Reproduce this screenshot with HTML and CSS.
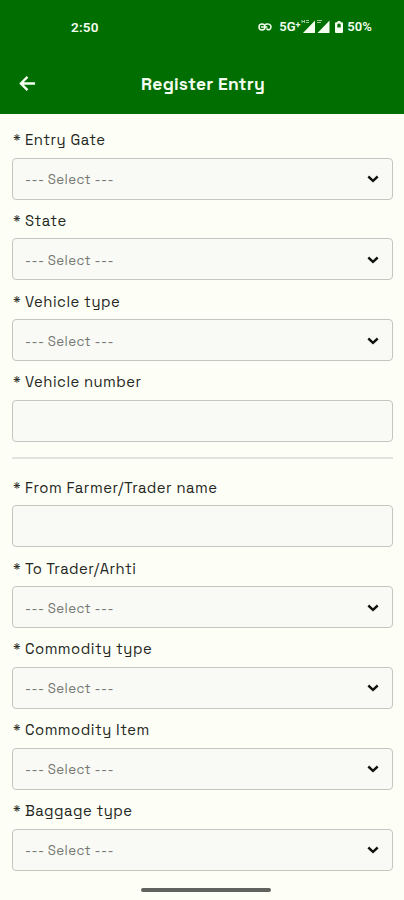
FILE: index.html
```html
<!DOCTYPE html>
<html lang="en">
<head>
<meta charset="utf-8">
<title>Register Entry</title>
<link rel="stylesheet" href="styles.css">
</head>
<body>
<svg class="defs" aria-hidden="true"><symbol id="chevron" viewBox="0 0 12 8"><path d="M1.3 1.5 6 5.8 10.7 1.5" fill="none" stroke="currentColor" stroke-width="2.4"/></symbol></svg>
<header class="header">
  <div class="status">
    <span class="time">2:50</span>
    <div class="indicators">
      <svg class="vpn" viewBox="0 0 14 10"><g fill="none" stroke="currentColor" stroke-width="1.5"><circle cx="4" cy="5" r="3"/><path d="M3 5h6.3M7 2.5C9 1.5 13 1.7 13 4.8 13 8 9.800 8.700 8.500 6.500"/></g></svg>
      <span class="network">5G<sup>+</sup></span>
      <svg class="signal" viewBox="0 0 29 14"><path d="M1 14 13 1.500V14ZM15.500 14l12-12.500V14Z" fill="currentColor"/><path d="M0 1v3M0 2.500h2M2.500 1v3M4 1.500h3M4 3.500h3M15 1.500h5M15 3.500h4" stroke="currentColor" opacity=".65"/></svg>
      <svg class="battery" viewBox="0 0 8 12"><path fill="currentColor" fill-rule="evenodd" d="M2.500 0h3v1.200H7q1 0 1 1V11q0 1-1 1H1q-1 0-1-1V2.200q0-1 1-1h1.500ZM2.300 3.500v3h3.400v-3L4 2.300Z"/></svg>
      <span class="percent">50%</span>
    </div>
  </div>
  <div class="bar">
    <svg class="back" viewBox="0 0 18 18"><path d="M17 9H2.500M9 2 2 9l7 7" fill="none" stroke="currentColor" stroke-width="2.500"/></svg>
    <h1 class="title">Register Entry</h1>
  </div>
</header>
<main class="form">
  <div class="field"><div class="label"><span class="star">*</span><span>Entry Gate</span></div><div class="control"><span class="value">--- Select ---</span><svg class="chevron"><use href="#chevron"/></svg></div></div>
  <div class="field"><div class="label"><span class="star">*</span><span>State</span></div><div class="control"><span class="value">--- Select ---</span><svg class="chevron"><use href="#chevron"/></svg></div></div>
  <div class="field"><div class="label"><span class="star">*</span><span>Vehicle type</span></div><div class="control"><span class="value">--- Select ---</span><svg class="chevron"><use href="#chevron"/></svg></div></div>
  <div class="field"><div class="label"><span class="star">*</span><span>Vehicle number</span></div><div class="control"></div></div>
  <div class="divider"></div>
  <div class="field"><div class="label"><span class="star">*</span><span>From Farmer/Trader name</span></div><div class="control"></div></div>
  <div class="field"><div class="label"><span class="star">*</span><span>To Trader/Arhti</span></div><div class="control"><span class="value">--- Select ---</span><svg class="chevron"><use href="#chevron"/></svg></div></div>
  <div class="field"><div class="label"><span class="star">*</span><span>Commodity type</span></div><div class="control"><span class="value">--- Select ---</span><svg class="chevron"><use href="#chevron"/></svg></div></div>
  <div class="field"><div class="label"><span class="star">*</span><span>Commodity Item</span></div><div class="control"><span class="value">--- Select ---</span><svg class="chevron"><use href="#chevron"/></svg></div></div>
  <div class="field"><div class="label"><span class="star">*</span><span>Baggage type</span></div><div class="control"><span class="value">--- Select ---</span><svg class="chevron"><use href="#chevron"/></svg></div></div>
</main>
<div class="home"></div>
</body>
</html>
```
FILE: styles.css
```css
* { box-sizing: border-box; }
body { margin: 0; height: 900px; overflow: hidden; background: #fdfff7; font-family: "Space Grotesk", Inter, sans-serif; color: #242622; display: flex; flex-direction: column; }
svg { display: block; flex: none; }
.defs { width: 0; height: 0; position: absolute; }
.header { height: 114px; flex: none; background: #006e00; color: #f4fff0; }
.status { height: 54px; padding: 0 32px 0 71px; display: flex; justify-content: space-between; align-items: center; font: 600 12.500px/16px Roboto, sans-serif; }
.time { font-size: 13.500px; letter-spacing: .2px; }
.indicators { display: flex; align-items: center; }
.vpn { width: 14px; height: 10px; margin-right: 7px; }
.network { width: 23px; font-size: 13px; white-space: nowrap; }
.network sup { font-size: 9px; line-height: 0; vertical-align: 3px; }
.signal { width: 29px; height: 14px; margin: -2px 4px 0 0; overflow: visible; }
.battery { width: 8px; height: 12px; margin-right: 4px; }
.percent { font-size: 13px; letter-spacing: .1px; }
.bar { height: 60px; display: grid; grid-template-columns: 18px 1fr 18px; align-items: center; padding: 0 19px; }
.back { width: 17px; height: 17px; margin-top: -1px; }
.title { margin: 0 0 0 2px; font-size: 17.500px; line-height: 24px; font-weight: 600; text-align: center; letter-spacing: .2px; }
.form { padding: 16px 11px 0 12px; }
.field { height: 69.500px; margin-bottom: 11.300px; display: flex; flex-direction: column; justify-content: space-between; }
.label { height: 20px; display: flex; font-size: 14.800px; line-height: 20px; letter-spacing: .5px; white-space: nowrap; }
.star { width: 13px; padding-left: 1px; }
.control { height: 42px; border: 1px solid #c4c7c0; border-radius: 4px; background: #f9faf5; display: flex; align-items: center; justify-content: space-between; padding: 3px 13px 0 12px; }
.value { color: #767873; font-size: 13.300px; line-height: 18px; letter-spacing: .4px; white-space: nowrap; }
.chevron { width: 12px; height: 8px; color: #10130f; margin-top: -2px; }
.divider { height: 2px; margin: 15px 0 19px; background: #e1e4dc; }
.home { width: 130px; height: 4px; border-radius: 2px; background: #60625d; margin: 6.500px 0 0 141px; flex: none; }
```
